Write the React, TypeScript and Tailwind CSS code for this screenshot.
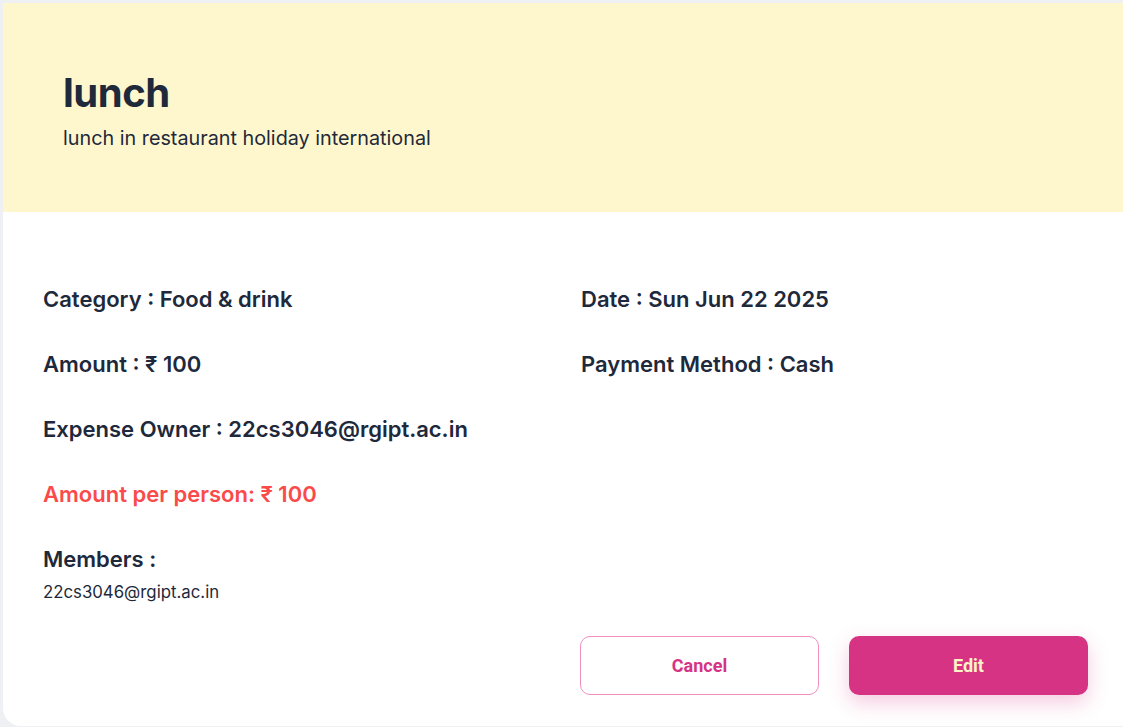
import React from "react";

const leftRows = [
  { label: "Category", value: "Food & drink" },
  { label: "Amount", value: "₹ 100" },
  { label: "Expense Owner", value: "22cs3046@rgipt.ac.in" },
];

const rightRows = [
  { label: "Date", value: "Sun Jun 22 2025" },
  { label: "Payment Method", value: "Cash" },
];

const App = () => {
  return (
    <div className="min-h-[727px] bg-[#eef0f3] pt-[3px] pl-[3px] overflow-hidden font-['Inter',sans-serif] text-[#1e293b]">
      {/* card */}
      <div className="w-[1150px] h-[723px] bg-white rounded-bl-[18px] overflow-hidden">
        {/* header */}
        <div className="h-[209px] bg-[#fef7cd] px-[60px] pt-[66px]">
          <h1 className="text-[40px] leading-[48px] font-bold tracking-[-0.5px]">lunch</h1>
          <p className="mt-[8px] text-[19.8px] leading-[26px]">lunch in restaurant holiday international</p>
        </div>

        {/* details */}
        <div className="grid grid-cols-[538px_1fr] pl-[40px] pt-[73px]">
          <div className="flex flex-col gap-[37px]">
            {leftRows.map((row) => (
              <p key={row.label} className="text-[22px] leading-[28px] font-semibold">
                {row.label} : {row.value}
              </p>
            ))}
            <p className="text-[22px] leading-[28px] font-semibold text-[#fb4a4a]">
              Amount per person: ₹ 100
            </p>
            <div>
              <p className="text-[22px] leading-[28px] font-semibold">Members :</p>
              <p className="mt-[9px] text-[16.8px] leading-[20px]">22cs3046@rgipt.ac.in</p>
            </div>
          </div>
          <div className="flex flex-col gap-[37px]">
            {rightRows.map((row) => (
              <p key={row.label} className="text-[22px] leading-[28px] font-semibold">
                {row.label} : {row.value}
              </p>
            ))}
          </div>
          {/* buttons */}
          <div className="col-start-2 mt-[34px] flex gap-[30px] -ml-px">
            <button className="w-[239px] h-[59px] rounded-[10px] border border-[#f08fc0] bg-white text-[#d63384] font-['Roboto',sans-serif] font-bold text-[18px]">
              Cancel
            </button>
            <button className="w-[239px] h-[59px] rounded-[10px] bg-[#d63384] text-[#fef3c7] font-['Roboto',sans-serif] font-bold text-[18px] shadow-[0_8px_20px_rgba(214,51,132,0.25)]">
              Edit
            </button>
          </div>
        </div>
      </div>
    </div>
  );
};

export default App;
